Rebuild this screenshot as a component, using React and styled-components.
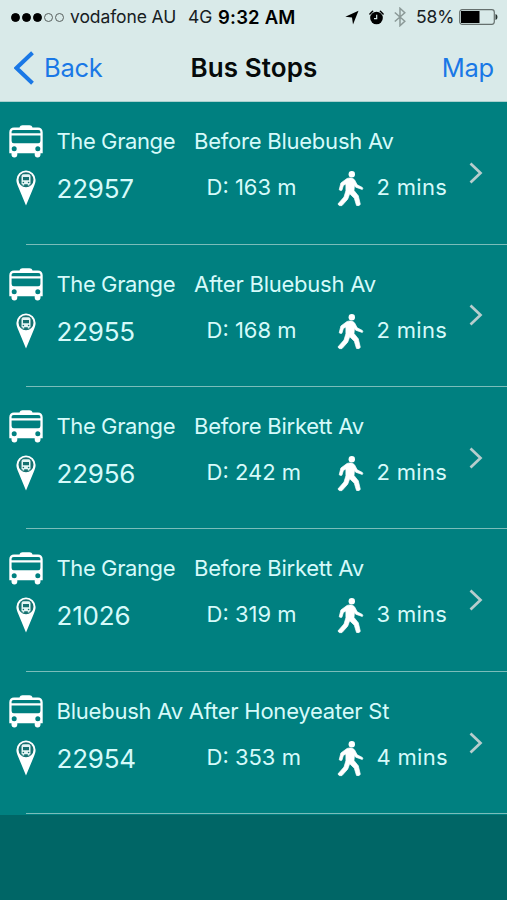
import React from "react";
import styled, { createGlobalStyle, ThemeProvider } from "styled-components";

const theme = {
  colors: {
    primary: "#008080",
    footer: "#006666",
    bar: "#d9eae9",
    link: "#1a78e6",
    text: "#d6fafa",
    line: "#7abdba",
  },
};

const GlobalStyle = createGlobalStyle`
  * {
    box-sizing: border-box;
  }
  body {
    margin: 0;
    background: ${props => props.theme.colors.footer};
    font-family: Inter, "Liberation Sans", sans-serif;
  }
  svg {
    display: block;
    flex: none;
  }
`;

const Screen = styled.div`
  width: 507px;
  height: 900px;
  overflow: hidden;
  background: ${props => props.theme.colors.footer};
`;

const Header = styled.header`
  height: 102px;
  background: ${props => props.theme.colors.bar};
  border-bottom: 1px solid #a9d0ce;
`;

const StatusBar = styled.div`
  display: flex;
  align-items: center;
  height: 34px;
  padding: 0 9px 0 11px;
  color: #17201f;
  font-size: 17.5px;
  line-height: 34px;
  white-space: pre;
`;

const Signal = styled.div`
  display: flex;
  gap: 2px;
  margin-right: 6px;
`;

const Dot = styled.span`
  width: 9px;
  height: 9px;
  border-radius: 50%;
  border: 1px solid ${props => (props.$on ? "#000" : "#59615f")};
  background: ${props => (props.$on ? "#000" : "transparent")};
`;

const StatusText = styled.span`
  flex: none;
  width: ${props => props.$width}px;
  font-weight: ${props => (props.$bold ? 600 : 400)};
  font-size: ${props => (props.$bold ? 18.5 : 17.5)}px;
  letter-spacing: ${props => props.$spacing || 0}px;
  color: ${props => (props.$bold ? "#000" : "inherit")};
`;

const StatusIcons = styled.div`
  display: flex;
  align-items: center;
  gap: 10px;
  margin-left: auto;
`;

const Battery = styled.div`
  display: flex;
  align-items: center;
`;

const NavBar = styled.nav`
  display: grid;
  grid-template-columns: 1fr auto 1fr;
  align-items: center;
  height: 67px;
  padding: 0 13px 0 14px;
`;

const NavLink = styled.a`
  display: flex;
  align-items: center;
  justify-self: ${props => (props.$end ? "end" : "start")};
  gap: 9px;
  color: ${props => props.theme.colors.link};
  font-size: 25.5px;
  letter-spacing: ${props => (props.$end ? -0.2 : -0.3)}px;
`;

const Title = styled.h1`
  margin: 0;
  font-size: 26px;
  font-weight: 600;
  letter-spacing: 0.1px;
  color: #060a0a;
`;

const StopList = styled.ul`
  margin: 0;
  padding: 0.6px 0 0;
  list-style: none;
  background: ${props => props.theme.colors.primary};
`;

const StopRow = styled.li`
  display: grid;
  grid-template-columns: 56.5px 1fr 38px;
  height: 142.4px;
  background: linear-gradient(${props => props.theme.colors.line}, ${props => props.theme.colors.line})
    26px 100% / 100% 1.4px no-repeat;
`;

const IconColumn = styled.div`
  display: flex;
  flex-direction: column;
  align-items: center;
  gap: 12px;
  width: 52px;
  padding-top: 22.6px;
`;

const Details = styled.div`
  padding-top: 22.6px;
  color: ${props => props.theme.colors.text};
  font-size: 22px;
  white-space: nowrap;
`;

const Place = styled.div`
  display: flex;
  height: 34px;
  line-height: 32px;
`;

const Suburb = styled.span`
  width: 137.5px;
  letter-spacing: -0.4px;
`;

const Street = styled.span`
  letter-spacing: -0.23px;
`;

const Facts = styled.div`
  display: grid;
  grid-template-columns: 150px 130px 40px auto;
  align-items: center;
  height: 36px;
  margin-top: 10px;
`;

const StopNumber = styled.span`
  font-size: 26px;
  line-height: 36px;
  letter-spacing: -0.2px;
`;

const Fact = styled.span`
  height: 40px;
  line-height: 36px;
  letter-spacing: ${props => props.$spacing || 0}px;
`;

const Arrow = styled.div`
  padding-top: 59.4px;
`;

const BusIcon = () => (
  <svg width="34" height="33" viewBox="0 0 34 33">
    <path
      fill="#fff"
      fillRule="evenodd"
      d="M10.500 2.500C11 1 12 .3 13.500 .3h7C22 .3 23 1 23.500 2.500h5.500C31.800 2.500 33.700 4.500 33.700 7.300V28.200H31.500v1.300a2.900 2.900 0 0 1-5.800 0v-1.300H8.300v1.300a2.900 2.900 0 0 1-5.800 0v-1.300H.3V7.300C.3 4.500 2.200 2.500 5 2.500ZM4.700 4.900C3.200 4.900 2.600 5.800 2.600 7.200V8.300H31.400V7.200C31.400 5.800 30.800 4.900 29.300 4.900ZM2.600 10.400V16Q2.600 18.200 4.800 18.200H29.200Q31.400 18.200 31.400 16V10.400ZM5.200 21.300a2.500 2.500 0 1 0 0 5a2.500 2.500 0 0 0 0-5ZM28.800 21.300a2.500 2.500 0 1 0 0 5a2.500 2.500 0 0 0 0-5Z"
    />
  </svg>
);

const PinIcon = () => (
  <svg width="20" height="36" viewBox="0 0 20 36">
    <path fill="#fff" d="M10 .5A9.500 9.500 0 0 0 .4 10c0 2.300.8 4.400 1.800 6.700L10 35.500l7.800-18.800c1-2.300 1.800-4.400 1.800-6.700A9.500 9.500 0 0 0 10 .5Z" />
    <circle cx="10" cy="9.800" r="7.500" fill="#16706f" />
    <path
      fill="#e4f5f4"
      fillRule="evenodd"
      d="M7.500 4.200h5q2 0 2 2v8h-1v1.200h-1.700v-1.200H8.200v1.200H6.500v-1.200h-1v-8q0-2 2-2ZM7 6.900v3.300h6V6.900ZM7.400 11.700a.8.800 0 1 0 0 1.600a.8.800 0 0 0 0-1.600ZM12.600 11.700a.8.800 0 1 0 0 1.600a.8.800 0 0 0 0-1.600Z"
    />
  </svg>
);

const WalkIcon = () => (
  <svg width="27" height="36" viewBox="0 0 27 36">
    <circle cx="14.800" cy="3.300" r="3.200" fill="#fff" />
    <path
      fill="#fff"
      stroke="#fff"
      strokeWidth=".7"
      strokeLinejoin="round"
      d="M10 7.500C12 6.600 16 6.700 17.600 8.900L20.200 13.800L25.300 16.400Q26.300 17.500 25.300 18.500L18.700 16.200L17.400 14.600L17 19.500L21.300 24.800L23.300 33.200Q22.500 35.400 19.500 34.400L17.300 27.200L12.700 22.800L10.700 28.200L5 34.600Q2 35.500 .9 33L7 26L8.900 19.800V12.900L6.400 14.500L4.900 19.200Q3.300 20 2.200 18.700L3.900 12Z"
    />
  </svg>
);

const Chevron = () => (
  <svg width="14" height="22" viewBox="0 0 14 22">
    <path d="M1.500 1.500L11.500 11L1.500 20.500" fill="none" stroke="#b7cdcd" strokeWidth="2.700" />
  </svg>
);

const BackArrow = () => (
  <svg width="21" height="34" viewBox="0 0 21 34">
    <path d="M18.500 1.800L2.500 17L18.500 32.200" fill="none" stroke="#1a78e6" strokeWidth="4" />
  </svg>
);

const LocationIcon = () => (
  <svg width="14" height="15" viewBox="0 0 14 15">
    <path d="M13.500 .8L8 14.500L7 7.600L.3 6.800Z" fill="#000" />
  </svg>
);

const AlarmIcon = () => (
  <svg width="15" height="15" viewBox="0 0 15 15">
    <circle cx="7.500" cy="8" r="6.300" fill="#000" />
    <path d="M.9 4L3.600 1.300M11.400 1.300L14.100 4" stroke="#000" strokeWidth="1.500" strokeLinecap="round" />
    <path d="M7.700 4.800V8.600H5" fill="none" stroke="#d9eae9" strokeWidth="1.200" />
  </svg>
);

const BluetoothIcon = () => (
  <svg width="12" height="20" viewBox="0 0 12 20">
    <path d="M.8 5.500L10.800 14.300L6 18.700V1.300L10.800 5.700L.8 14.500" fill="none" stroke="#8b9997" strokeWidth="1.500" />
  </svg>
);

const BatteryIcon = () => (
  <svg width="39" height="16" viewBox="0 0 39 16">
    <rect x=".7" y=".7" width="34.600" height="14.600" rx="2.500" fill="none" stroke="#66706e" strokeWidth="1.200" />
    <path d="M2 2H20.500V14H2Z" fill="#000" />
    <path d="M36.500 5Q38.500 5.500 38.500 8T36.500 11Z" fill="#26302e" />
  </svg>
);

const stops = [
  { id: "22957", suburb: "The Grange", street: "Before Bluebush Av", distance: "163 m", time: "2 mins" },
  { id: "22955", suburb: "The Grange", street: "After Bluebush Av", distance: "168 m", time: "2 mins" },
  { id: "22956", suburb: "The Grange", street: "Before Birkett Av", distance: "242 m", time: "2 mins" },
  { id: "21026", suburb: "The Grange", street: "Before Birkett Av", distance: "319 m", time: "3 mins" },
  { id: "22954", street: "Bluebush Av After Honeyeater St", distance: "353 m", time: "4 mins" },
];

const Stop = ({ stop }) => (
  <StopRow>
    <IconColumn>
      <BusIcon />
      <PinIcon />
    </IconColumn>
    <Details>
      <Place>
        {stop.suburb && <Suburb>{stop.suburb}</Suburb>}
        <Street>{stop.street}</Street>
      </Place>
      <Facts>
        <StopNumber>{stop.id}</StopNumber>
        <Fact>D: {stop.distance}</Fact>
        <WalkIcon />
        <Fact $spacing={0.3}>{stop.time}</Fact>
      </Facts>
    </Details>
    <Arrow>
      <Chevron />
    </Arrow>
  </StopRow>
);

const App = () => {
  return (
    <ThemeProvider theme={theme}>
      <GlobalStyle />
      <Screen>
        <Header>
          <StatusBar>
            <Signal>
              {[true, true, true, false, false].map((on, i) => (
                <Dot key={i} $on={on} />
              ))}
            </Signal>
            <StatusText $width={118} $spacing={-0.1}>vodafone AU</StatusText>
            <StatusText $width={30} $spacing={-0.1}>4G</StatusText>
            <StatusText $width={90} $spacing={0.2} $bold>9:32 AM</StatusText>
            <StatusIcons>
              <LocationIcon />
              <AlarmIcon />
              <BluetoothIcon />
              <Battery>
                <StatusText $width={43} $spacing={-0.1}>58%</StatusText>
                <BatteryIcon />
              </Battery>
            </StatusIcons>
          </StatusBar>
          <NavBar>
            <NavLink>
              <BackArrow />
              Back
            </NavLink>
            <Title>Bus Stops</Title>
            <NavLink $end>Map</NavLink>
          </NavBar>
        </Header>
        <StopList>
          {stops.map(stop => (
            <Stop key={stop.id} stop={stop} />
          ))}
        </StopList>
      </Screen>
    </ThemeProvider>
  );
};

export default App;
